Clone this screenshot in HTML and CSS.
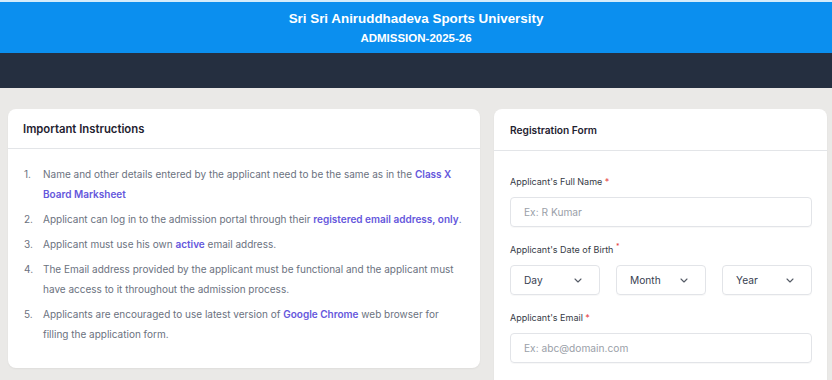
FILE: index.html
```html
<!DOCTYPE html>
<html lang="en">
<head>
<meta charset="utf-8">
<title>Admission 2025-26</title>
<link rel="stylesheet" href="styles.css">
</head>
<body>
<header class="topbar">
  <h1 class="uni-title">Sri Sri Aniruddhadeva Sports University</h1>
  <p class="uni-sub">ADMISSION-2025-26</p>
</header>
<nav class="navbar"></nav>
<main class="content">
  <section class="card">
    <div class="card-head"><h2 class="card-title">Important Instructions</h2></div>
    <ol class="instructions">
      <li>Name and other details entered by the applicant need to be the same as in the <b>Class X Board Marksheet</b></li>
      <li>Applicant can log in to the admission portal through their <b>registered email address, only</b>.</li>
      <li>Applicant must use his own <b>active</b> email address.</li>
      <li>The Email address provided by the applicant must be functional and the applicant must have access to it throughout the admission process.</li>
      <li>Applicants are encouraged to use latest version of <b>Google Chrome</b> web browser for filling the application form.</li>
    </ol>
  </section>
  <section class="card form-card">
    <div class="card-head card-head-form"><h2 class="card-title small">Registration Form</h2></div>
    <form class="form-body">
      <div class="field">
        <label class="label">Applicant's Full Name <span class="req">*</span></label>
        <div class="input"><span class="ph">Ex: R Kumar</span></div>
      </div>
      <div class="field">
        <label class="label">Applicant's Date of Birth <sup class="req sup">*</sup></label>
        <div class="selects">
          <div class="select"><span>Day</span><svg class="chev" viewBox="0 0 8 5" width="8" height="5"><path d="M1 1l3 3 3-3" fill="none" stroke="#555b66" stroke-width="1.1" stroke-linecap="round" stroke-linejoin="round"/></svg></div>
          <div class="select"><span>Month</span><svg class="chev" viewBox="0 0 8 5" width="8" height="5"><path d="M1 1l3 3 3-3" fill="none" stroke="#555b66" stroke-width="1.1" stroke-linecap="round" stroke-linejoin="round"/></svg></div>
          <div class="select"><span>Year</span><svg class="chev" viewBox="0 0 8 5" width="8" height="5"><path d="M1 1l3 3 3-3" fill="none" stroke="#555b66" stroke-width="1.1" stroke-linecap="round" stroke-linejoin="round"/></svg></div>
        </div>
      </div>
      <div class="field">
        <label class="label">Applicant's Email <span class="req">*</span></label>
        <div class="input"><span class="ph">Ex: abc@domain.com</span></div>
      </div>
    </form>
  </section>
</main>
</body>
</html>
```

FILE: styles.css
```css
* { box-sizing: border-box; }
html, body { margin: 0; padding: 0; }
body {
  background: #eae9e7;
  font-family: Inter, "Noto Sans", sans-serif;
  color: #374151;
  height: 380px;
  overflow: hidden;
}
.topbar {
  background: #0b8fef;
  border-top: 2px solid #d4ecfb;
  height: 53px;
  text-align: center;
  color: #fff;
  padding-top: 9px;
}
.uni-title {
  margin: 0;
  font-family: "Liberation Sans", Arial, sans-serif;
  font-weight: 700;
  font-size: 13.4px;
  line-height: 16px;
}
.uni-sub {
  margin: 4px 0 0;
  font-family: "Liberation Sans", Arial, sans-serif;
  font-weight: 700;
  font-size: 11.5px;
  line-height: 14px;
}
.navbar {
  background: #252f40;
  height: 35px;
}
.content {
  display: grid;
  grid-template-columns: 472px 333px;
  column-gap: 14px;
  padding: 21px 5px 0 8px;
  align-items: start;
}
.card {
  background: #fff;
  border-radius: 8px;
  box-shadow: 0 1px 2px rgba(0,0,0,0.05);
}
.card-head {
  height: 40px;
  border-bottom: 1px solid #e3e5e8;
  padding: 0 15px;
  display: flex;
  align-items: center;
}
.card-head-form { height: 42px; padding: 0 16px; }
.card-title {
  margin: 0;
  font-size: 11.3px;
  font-weight: 600;
  color: #1f2230;
}
.card-title.small { font-size: 10.2px; }
.instructions {
  margin: 0;
  padding: 15px 15px 24px 16px;
  list-style: none;
  counter-reset: item;
}
.instructions li {
  counter-increment: item;
  position: relative;
  padding-left: 19px;
  font-size: 10px;
  line-height: 20px;
  color: #6b7280;
  margin-bottom: 5px;
}
.instructions li:last-child { margin-bottom: 0; }
.instructions li::before {
  content: counter(item) ".";
  position: absolute;
  left: 0;
  top: 0;
  color: #6b7280;
}
.instructions b {
  color: #6557dc;
  font-weight: 600;
}
.form-card {
  height: 290px;
  border-bottom-left-radius: 0;
  border-bottom-right-radius: 0;
}
.form-body {
  padding: 24px 15px 0 16px;
}
.field { margin-bottom: 16px; }
.label {
  display: block;
  font-size: 9px;
  line-height: 14px;
  color: #363b46;
  margin-bottom: 8px;
}
.req { color: #e53e3e; }
.sup { font-size: 7px; vertical-align: 4px; line-height: 0; }
.input {
  height: 30px;
  border: 1px solid #e2e4e8;
  border-radius: 4px;
  box-shadow: 0 1px 1px rgba(0,0,0,0.03);
  display: flex;
  align-items: center;
  padding: 0 13px;
}
.ph {
  font-size: 10.2px;
  color: #9aa0a8;
}
.selects {
  display: grid;
  grid-template-columns: 90px 90px 90px;
  justify-content: space-between;
}
.select {
  height: 30px;
  border: 1px solid #e2e4e8;
  border-radius: 4px;
  box-shadow: 0 1px 1px rgba(0,0,0,0.03);
  display: flex;
  align-items: center;
  justify-content: space-between;
  padding: 0 17px 0 13px;
  font-size: 10.2px;
  color: #374151;
}
.chev { display: block; }
```
